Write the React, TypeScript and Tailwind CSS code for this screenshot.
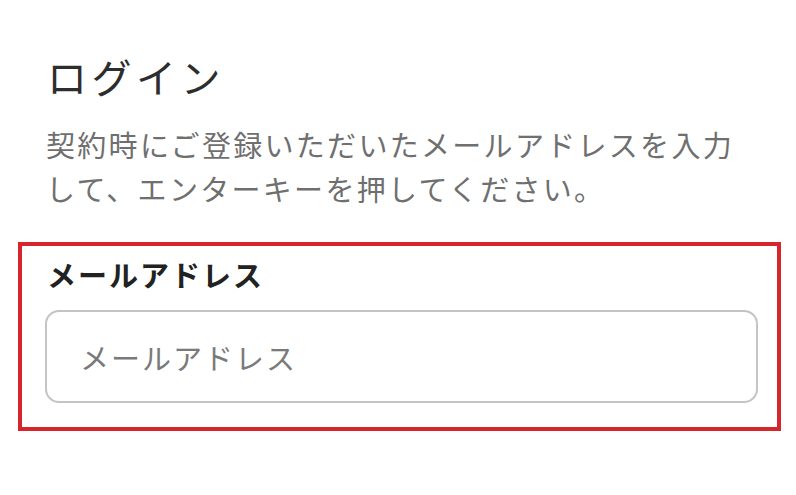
export default function App() {
  return (
    <div className="h-[495px] w-[796px] overflow-hidden bg-white pt-[50px] font-['Noto_Sans_CJK_JP',sans-serif]">
      <h1 className="pl-[47px] text-[40px] leading-[52px] tracking-[4.5px] text-[#2d2d2d]">ログイン</h1>

      <p className="mt-[20px] pl-[46px] pr-[50px] text-[29px] leading-[44px] tracking-[2.3px] text-[#6f6f6f]">
        契約時にご登録いただいたメールアドレスを入力して、エンターキーを押してください。
      </p>

      <div className="ml-[18px] mt-[32px] w-[763px] border-4 border-[#d6252d] pb-[24px] pl-[23px] pr-[19px] pt-[8px]">
        <label className="block pl-[2px] text-[29px] font-bold leading-[40px] tracking-[2px] text-[#222]">
          メールアドレス
        </label>
        <input
          type="email"
          placeholder="メールアドレス"
          className="mt-[16px] block h-[93px] w-full rounded-[14px] border-2 border-[#c4c4c4] px-[33px] text-[29px] tracking-[2px] text-[#333] outline-none placeholder:text-[#7a7a7a]"
        />
      </div>
    </div>
  );
}
